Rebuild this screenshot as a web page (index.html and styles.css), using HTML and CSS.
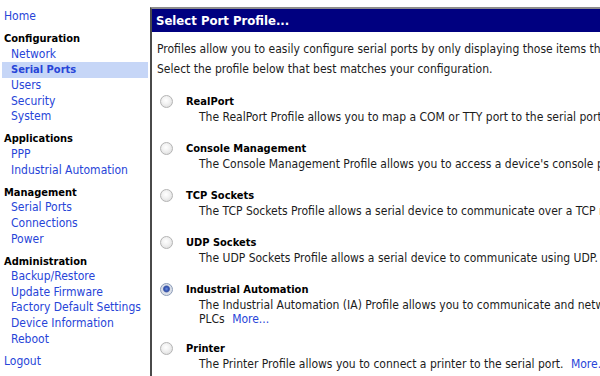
FILE: index.html
```html
<!DOCTYPE html>
<html>
  <head>
    <title>Select Port Profile</title>
    <link rel="stylesheet" href="styles.css">
  </head>
  <body>
    <div class="nav">
      <a class="nav-top" href="#">Home</a>

      <div class="nav-group">
        <div class="nav-title">Configuration</div>
        <a class="nav-link" href="#">Network</a>
        <a class="nav-link selected" href="#">Serial Ports</a>
        <a class="nav-link" href="#">Users</a>
        <a class="nav-link" href="#">Security</a>
        <a class="nav-link" href="#">System</a>
      </div>

      <div class="nav-group">
        <div class="nav-title">Applications</div>
        <a class="nav-link" href="#">PPP</a>
        <a class="nav-link" href="#">Industrial Automation</a>
      </div>

      <div class="nav-group">
        <div class="nav-title">Management</div>
        <a class="nav-link" href="#">Serial Ports</a>
        <a class="nav-link" href="#">Connections</a>
        <a class="nav-link" href="#">Power</a>
      </div>

      <div class="nav-group">
        <div class="nav-title">Administration</div>
        <a class="nav-link" href="#">Backup/Restore</a>
        <a class="nav-link" href="#">Update Firmware</a>
        <a class="nav-link" href="#">Factory Default Settings</a>
        <a class="nav-link" href="#">Device Information</a>
        <a class="nav-link" href="#">Reboot</a>
      </div>

      <div class="nav-group">
        <a class="nav-top" href="#">Logout</a>
      </div>
    </div>

    <div class="panel">
      <div class="panel-header">Select Port Profile...</div>
      <div class="panel-body">
        <p class="intro">Profiles allow you to easily configure serial ports by only displaying those items that are relevant to the selected profile.</p>
        <p class="intro">Select the profile below that best matches your configuration.</p>

        <form class="profiles">
          <label class="profile">
            <input type="radio" name="profile" value="realport">
            <span class="profile-name">RealPort</span>
            <span class="profile-desc">The RealPort Profile allows you to map a COM or TTY port to the serial port.</span>
          </label>
          <label class="profile">
            <input type="radio" name="profile" value="console">
            <span class="profile-name">Console Management</span>
            <span class="profile-desc">The Console Management Profile allows you to access a device's console port over a network connection.</span>
          </label>
          <label class="profile">
            <input type="radio" name="profile" value="tcp">
            <span class="profile-name">TCP Sockets</span>
            <span class="profile-desc">The TCP Sockets Profile allows a serial device to communicate over a TCP network.</span>
          </label>
          <label class="profile">
            <input type="radio" name="profile" value="udp">
            <span class="profile-name">UDP Sockets</span>
            <span class="profile-desc">The UDP Sockets Profile allows a serial device to communicate using UDP.</span>
          </label>
          <label class="profile">
            <input type="radio" name="profile" value="ia" checked>
            <span class="profile-name">Industrial Automation</span>
            <span class="profile-desc">The Industrial Automation (IA) Profile allows you to communicate and network with<br>PLCs <a class="more" href="#">More...</a></span>
          </label>
          <label class="profile">
            <input type="radio" name="profile" value="printer">
            <span class="profile-name">Printer</span>
            <span class="profile-desc">The Printer Profile allows you to connect a printer to the serial port. <a class="more" href="#">More...</a></span>
          </label>
        </form>
      </div>
    </div>
  </body>
</html>
```
FILE: styles.css
```css
html,
body {
  overflow: hidden;
}

body {
  margin: 0;
  display: flex;
  align-items: flex-start;
  font-family: "DejaVu Sans Condensed", "DejaVu Sans", sans-serif;
  font-size: 12px;
  color: #1c1c1c;
  background: #fff;
}

a {
  color: #2745d8;
  text-decoration: none;
}

/* left navigation */

.nav {
  flex: 0 0 148px;
  padding-top: 9px;
  line-height: 15.6px;
}

.nav-top {
  display: block;
  padding-left: 4px;
}

.nav-group {
  margin-top: 6.6px;
}

.nav-title {
  padding-left: 4px;
  font-size: 11px;
  font-weight: bold;
  color: #000;
}

.nav-link {
  display: block;
  margin-left: 2px;
  padding-left: 9px;
}

.nav-link.selected {
  background: #c6d6f7;
  font-size: 11px;
  font-weight: bold;
}

/* profile panel */

.panel {
  flex: 0 0 auto;
  width: 700px;
  margin: 7px 0 0 2px;
  border-top: 2px solid #8c8c8c;
  border-left: 2px solid #4a4a4a;
  white-space: nowrap;
}

.panel-header {
  height: 23px;
  line-height: 24px;
  padding-left: 4px;
  background: #000080;
  color: #fff;
  font-size: 13px;
  font-weight: bold;
}

.panel-body {
  padding: 10px 0 0 5px;
}

.intro {
  margin: 0 0 4.6px;
  line-height: 15.6px;
}

.profiles {
  margin: 16px 0 0 3px;
}

.profile {
  display: grid;
  grid-template-columns: 26px auto;
  margin-bottom: 17px;
}

.profile:nth-child(5) {
  margin-bottom: 15px;
}

.profile input {
  appearance: none;
  grid-row: 1;
  width: 13px;
  height: 13px;
  margin: 1px 0 0;
  border: 1px solid #b4b4b4;
  border-radius: 50%;
  background: radial-gradient(circle at 45% 40%, #fff 0%, #f2f2f2 40%, #d6d6d6 100%);
}

.profile input:checked {
  border-color: #8a9bb8;
  background: radial-gradient(circle at 50% 45%, #6f8fe0 0%, #2e4fae 28%, #4860a8 36%, #d8dde8 48%, #e8e8e8 100%);
}

.profile-name {
  grid-row: 1;
  grid-column: 2;
  line-height: 16px;
  font-size: 11px;
  font-weight: bold;
  color: #000;
}

.profile-desc {
  grid-column: 2;
  padding-left: 13px;
  line-height: 14px;
}

.more {
  margin-left: 4px;
}
```
